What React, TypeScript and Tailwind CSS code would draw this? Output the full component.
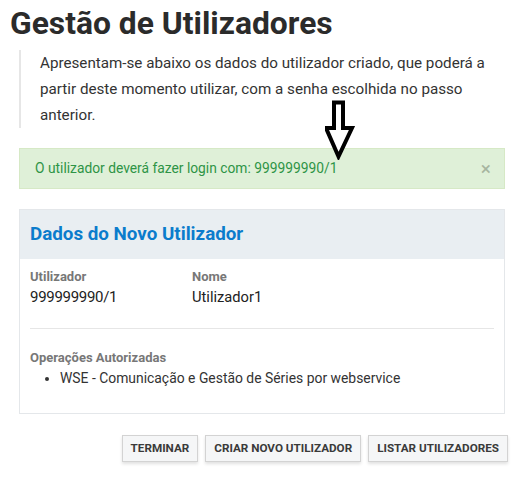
export default function App() {
  return (
    <div className="relative w-[527px] h-[482px] bg-white font-['Roboto',sans-serif] text-[#333]">
      <h1 className="pl-[10px] pt-[3px] text-[31.8px] leading-[40px] font-bold text-[#2b2b2b]">
        Gestão de Utilizadores
      </h1>

      <div className="ml-[19px] mt-[7px] w-[485px] border-l-2 border-[#e6e6e6] pl-[19px] text-[15.2px] leading-[26px] text-[#333]">
        Apresentam-se abaixo os dados do utilizador criado, que poderá a partir deste momento utilizar, com a senha escolhida no passo anterior.
      </div>

      {/* seta desenhada sobre a página */}
      <svg className="absolute left-[325px] top-[100px]" width="30" height="60" viewBox="0 0 30 60">
        <path d="M9 2.5 H18 V28 H27 L13.5 56.5 L1 28 H9 Z" fill="white" stroke="black" strokeWidth="4" strokeLinejoin="miter" />
      </svg>

      <div className="ml-[19px] mt-[20px] flex h-[41px] w-[486px] items-center justify-between border border-[#d6e9c6] bg-[#dff0d8] pl-[15px] pr-[13px] text-[13.8px] text-[#2e9446]">
        <span>O utilizador deverá fazer login com: 999999990/1</span>
        <span className="text-[19px] leading-none text-[#a6b5a0]">×</span>
      </div>

      <div className="ml-[19px] mt-[20px] w-[486px] border border-[#e4e7ea] bg-white">
        <div className="flex h-[49px] items-center bg-[#e9eef2] px-[10px] text-[18.8px] font-bold text-[#0b7ccc]">
          Dados do Novo Utilizador
        </div>
        <div className="px-[10px] pt-[8px]">
          <div className="flex">
            <div className="w-[162px]">
              <div className="text-[13px] font-bold leading-[20px] text-[#777]">Utilizador</div>
              <div className="text-[15px] leading-[20px] tracking-[-0.3px] text-[#222]">999999990/1</div>
            </div>
            <div>
              <div className="text-[13px] font-bold leading-[20px] text-[#777]">Nome</div>
              <div className="text-[14.7px] leading-[20px] text-[#222]">Utilizador1</div>
            </div>
          </div>
          <div className="mt-[21px] h-px bg-[#e6e6e6]" />
          <div className="pt-[19px] pb-[25px]">
            <div className="text-[13px] font-bold leading-[20px] text-[#777]">Operações Autorizadas</div>
            <ul className="list-disc pl-[30px] text-[13.9px] leading-[20px] text-[#333]">
              <li>WSE - Comunicação e Gestão de Séries por webservice</li>
            </ul>
          </div>
        </div>
      </div>

      <div className="mt-[21px] flex justify-end gap-[7px] pr-[19px]">
        {["TERMINAR", "CRIAR NOVO UTILIZADOR", "LISTAR UTILIZADORES"].map((b) => (
          <button
            key={b}
            className="h-[27px] border border-[#d3d3d3] bg-[#f5f6f7] px-[8px] text-[11.7px] font-bold text-[#3a3a3a] shadow-[0_2px_3px_rgba(0,0,0,0.12)]"
          >
            {b}
          </button>
        ))}
      </div>
    </div>
  );
}
